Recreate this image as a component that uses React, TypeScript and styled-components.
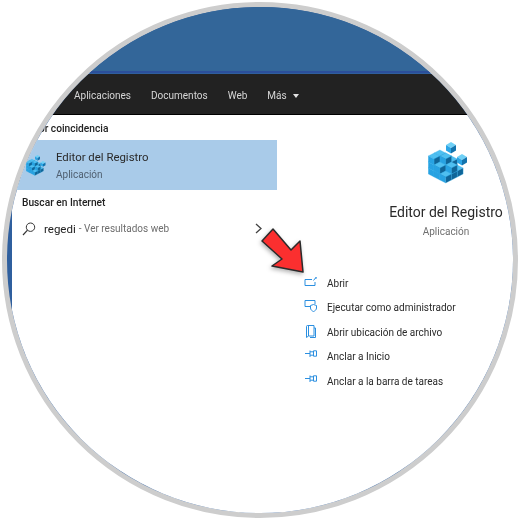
import React from 'react';
import styled, { createGlobalStyle } from 'styled-components';

const GlobalStyle = createGlobalStyle`
  html, body {
    margin: 0;
    padding: 0;
    background: #fff;
    font-family: Roboto, "Open Sans", "Liberation Sans", sans-serif;
  }
`;

const Page = styled.div`
  position: relative;
  width: 520px;
  height: 520px;
  padding: 2px;
  box-sizing: border-box;
  overflow: hidden;
`;

const Lens = styled.div`
  width: 516px;
  height: 516px;
  box-sizing: border-box;
  border: 5.5px solid #cdcdcd;
  border-radius: 50%;
  overflow: hidden;
  display: flex;
  flex-direction: column;
  background: #2f5f9e;
  filter: blur(0.3px);
`;

const Wallpaper = styled.div`
  flex: none;
  height: 64px;
  background: #336699;
  border-bottom: 2px solid #2b4f9b;
`;

const Nav = styled.nav`
  flex: none;
  height: 41px;
  box-sizing: border-box;
  margin-top: 1px;
  padding: 3px 0 0 67px;
  display: flex;
  align-items: center;
  gap: 20px;
  background: #222222;
  border-bottom: 1px solid #000;
  color: #d6d6d6;
  font-size: 10px;
`;

const Tab = styled.span`
  display: flex;
  align-items: center;
  gap: 6px;
  white-space: nowrap;
`;

const Caret = styled.i`
  width: 0;
  height: 0;
  border-left: 3.5px solid transparent;
  border-right: 3.5px solid transparent;
  border-top: 4px solid #e4e4e4;
`;

const Content = styled.div`
  flex: 1;
  margin-left: 5px;
  display: flex;
  background: #fff;
  min-height: 0;
`;

const Results = styled.section`
  flex: none;
  width: 265px;
  display: flex;
  flex-direction: column;
`;

const SectionLabel = styled.h3`
  margin: 0;
  padding-left: 10px;
  height: 25px;
  line-height: 26px;
  font-size: 10.2px;
  font-weight: 500;
  color: #222;
  white-space: nowrap;

  &:first-child {
    line-height: 28px;
  }
`;

const BestMatch = styled.div`
  height: 50px;
  display: flex;
  align-items: center;
  gap: 10px;
  padding-left: 14px;
  background: #a9cbe9;
`;

const MatchText = styled.div`
  display: flex;
  flex-direction: column;
  gap: 5px;
`;

const MatchTitle = styled.span`
  font-size: 11.4px;
  color: #2a2a2a;
`;

const MatchSub = styled.span`
  font-size: 10px;
  color: #4f5f70;
`;

const SearchRow = styled.div`
  height: 27px;
  display: flex;
  align-items: center;
  padding: 0 15px 0 10px;
  font-size: 10px;
  color: #6d6d6d;
`;

const Query = styled.span`
  margin-left: 8px;
  font-size: 11.5px;
  color: #222;
`;

const Hint = styled.span`
  margin-left: 3px;
  flex: 1;
`;

const Details = styled.section`
  flex: none;
  width: 338px;
  display: flex;
  flex-direction: column;
`;

const Hero = styled.div`
  display: flex;
  flex-direction: column;
  align-items: center;
  padding-top: 25px;
`;

const HeroIcon = styled.div`
  height: 44px;
  margin-left: 4px;
`;

const HeroTitle = styled.div`
  margin-top: 20px;
  font-size: 14px;
  color: #2a2a2a;
`;

const HeroSub = styled.div`
  margin-top: 6px;
  font-size: 10px;
  color: #6f6f6f;
`;

const Actions = styled.ul`
  list-style: none;
  margin: 34px 0 0;
  padding: 0 0 0 27px;
  display: flex;
  flex-direction: column;
`;

const Action = styled.li`
  height: 24.5px;
  display: flex;
  align-items: center;
  gap: 9px;
  font-size: 10px;
  color: #2a2a2a;
  white-space: nowrap;
`;

const Pointer = styled.svg`
  position: absolute;
  left: 0;
  top: 0;
  pointer-events: none;
  filter: drop-shadow(-1px 2px 2px rgba(0, 0, 0, 0.3));
`;

// registry logo: iso grid of cube heights, rows go back to front
const heights = [
  [2, 2, 1],
  [3, 3, 2],
  [3, 2, 1],
];
const A = 5.8;
const DY = 3;
const H = 6;
const CX = 17.7;
const BASE = 25;

const iso = (i: number, j: number, k: number) =>
  `${CX + (i - j) * A},${BASE + (i + j) * DY - k * H}`;

const cells = heights
  .flatMap((row, j) => row.flatMap((h, i) => Array.from({ length: h }, (_, k) => ({ i, j, k }))))
  .sort((p, q) => p.i + p.j - (q.i + q.j) || p.k - q.k);

const FloatingCube = ({ x, y, s }: { x: number; y: number; s: number }) => (
  <g>
    <polygon points={`${x},${y} ${x + s},${y - s * 0.6} ${x + 2 * s},${y} ${x + s},${y + s * 0.6}`} fill="#6fd0f6" />
    <polygon points={`${x},${y} ${x + s},${y + s * 0.6} ${x + s},${y + 1.7 * s} ${x},${y + 1.1 * s}`} fill="#2aa5e6" />
    <polygon points={`${x + s},${y + s * 0.6} ${x + 2 * s},${y} ${x + 2 * s},${y + 1.1 * s} ${x + s},${y + 1.7 * s}`} fill="#1273ad" />
  </g>
);

const RegistryIcon = ({ width, height }: { width: number; height: number }) => (
  <svg width={width} height={height} viewBox="0 0 40 44">
    {cells.map(({ i, j, k }) => (
      <g key={`${i}-${j}-${k}`} stroke="#3bb0ea" strokeWidth="0.3">
        <polygon points={`${iso(i, j, k + 1)} ${iso(i + 1, j, k + 1)} ${iso(i + 1, j + 1, k + 1)} ${iso(i, j + 1, k + 1)}`} fill="#4fbff0" />
        <polygon points={`${iso(i, j + 1, k + 1)} ${iso(i + 1, j + 1, k + 1)} ${iso(i + 1, j + 1, k)} ${iso(i, j + 1, k)}`} fill="#27a2e2" />
        <polygon points={`${iso(i + 1, j, k + 1)} ${iso(i + 1, j + 1, k + 1)} ${iso(i + 1, j + 1, k)} ${iso(i + 1, j, k)}`} fill="#0f6598" />
      </g>
    ))}
    <FloatingCube x={18} y={5} s={5} />
    <FloatingCube x={29} y={17} s={5} />
  </svg>
);

const SearchGlyph = () => (
  <svg width="14" height="14" viewBox="0 0 14 14" fill="none" stroke="#333" strokeWidth="1">
    <circle cx="8.5" cy="5.2" r="4.2" />
    <path d="M5.5 8.2 L1 13" strokeWidth="1.2" />
  </svg>
);

const Chevron = () => (
  <svg width="7" height="11" viewBox="0 0 7 11" fill="none" stroke="#444" strokeWidth="1.3">
    <path d="M1 1 L6 5.5 L1 10" />
  </svg>
);

const iconPaths: Record<string, React.ReactNode> = {
  open: (
    <>
      <path d="M8 3.5H1V9.5H11V6" />
      <path d="M9.5 4.5 L11.5 2" />
      <circle cx="12" cy="1.8" r="0.9" fill="#2b8fe0" stroke="none" />
    </>
  ),
  admin: (
    <>
      <path d="M6.5 6.5H1V0.5H11V4" />
      <path d="M9.5 4.5 L12.5 5.5 V8 C12.5 9.7 11 11 9.5 11.5 C8 11 6.5 9.7 6.5 8 V5.5 Z" />
    </>
  ),
  folder: (
    <>
      <path d="M2.5 1.5 Q2.5 0.5 3.5 0.5 H10 V11 H4.5 L2.5 12.5 Z" />
      <path d="M4.5 1 V11" />
      <path d="M10 3 H11.5 V12.5 H6" />
    </>
  ),
  pin: (
    <>
      <path d="M1 4.5 H6" />
      <path d="M6 1.5 V8" />
      <path d="M6 2.8 H9.5 M6 6.2 H9.5" />
      <path d="M9.5 1.8 V7.2 H12.5 V1.8 Z" />
    </>
  ),
};

const ActionIcon = ({ name }: { name: string }) => (
  <svg width="14" height="15" viewBox="0 0 14 15" fill="none" stroke="#2b8fe0" strokeWidth="1">
    {iconPaths[name]}
  </svg>
);

const actions = [
  { icon: 'open', label: 'Abrir' },
  { icon: 'admin', label: 'Ejecutar como administrador' },
  { icon: 'folder', label: 'Abrir ubicación de archivo' },
  { icon: 'pin', label: 'Anclar a Inicio' },
  { icon: 'pin', label: 'Anclar a la barra de tareas' },
];

const App: React.FC = () => (
  <Page>
    <GlobalStyle />
    <Lens>
      <Wallpaper />
      <Nav>
        <Tab>Aplicaciones</Tab>
        <Tab>Documentos</Tab>
        <Tab>Web</Tab>
        <Tab>
          Más <Caret />
        </Tab>
      </Nav>
      <Content>
        <Results>
          <SectionLabel>Mejor coincidencia</SectionLabel>
          <BestMatch>
            <RegistryIcon width={20} height={22} />
            <MatchText>
              <MatchTitle>Editor del Registro</MatchTitle>
              <MatchSub>Aplicación</MatchSub>
            </MatchText>
          </BestMatch>
          <SectionLabel>Buscar en Internet</SectionLabel>
          <SearchRow>
            <SearchGlyph />
            <Query>regedi</Query>
            <Hint>- Ver resultados web</Hint>
            <Chevron />
          </SearchRow>
        </Results>
        <Details>
          <Hero>
            <HeroIcon>
              <RegistryIcon width={40} height={44} />
            </HeroIcon>
            <HeroTitle>Editor del Registro</HeroTitle>
            <HeroSub>Aplicación</HeroSub>
          </Hero>
          <Actions>
            {actions.map((a) => (
              <Action key={a.label}>
                <ActionIcon name={a.icon} />
                {a.label}
              </Action>
            ))}
          </Actions>
        </Details>
      </Content>
    </Lens>
    <Pointer width="520" height="520" viewBox="0 0 520 520">
      <polygon
        points="303,272 300,241 291,250 273,229 262,241 282,259 272,266"
        fill="#fb2f2f"
        stroke="#2b2b2b"
        strokeWidth="1.5"
        strokeLinejoin="round"
      />
    </Pointer>
  </Page>
);

export default App;
